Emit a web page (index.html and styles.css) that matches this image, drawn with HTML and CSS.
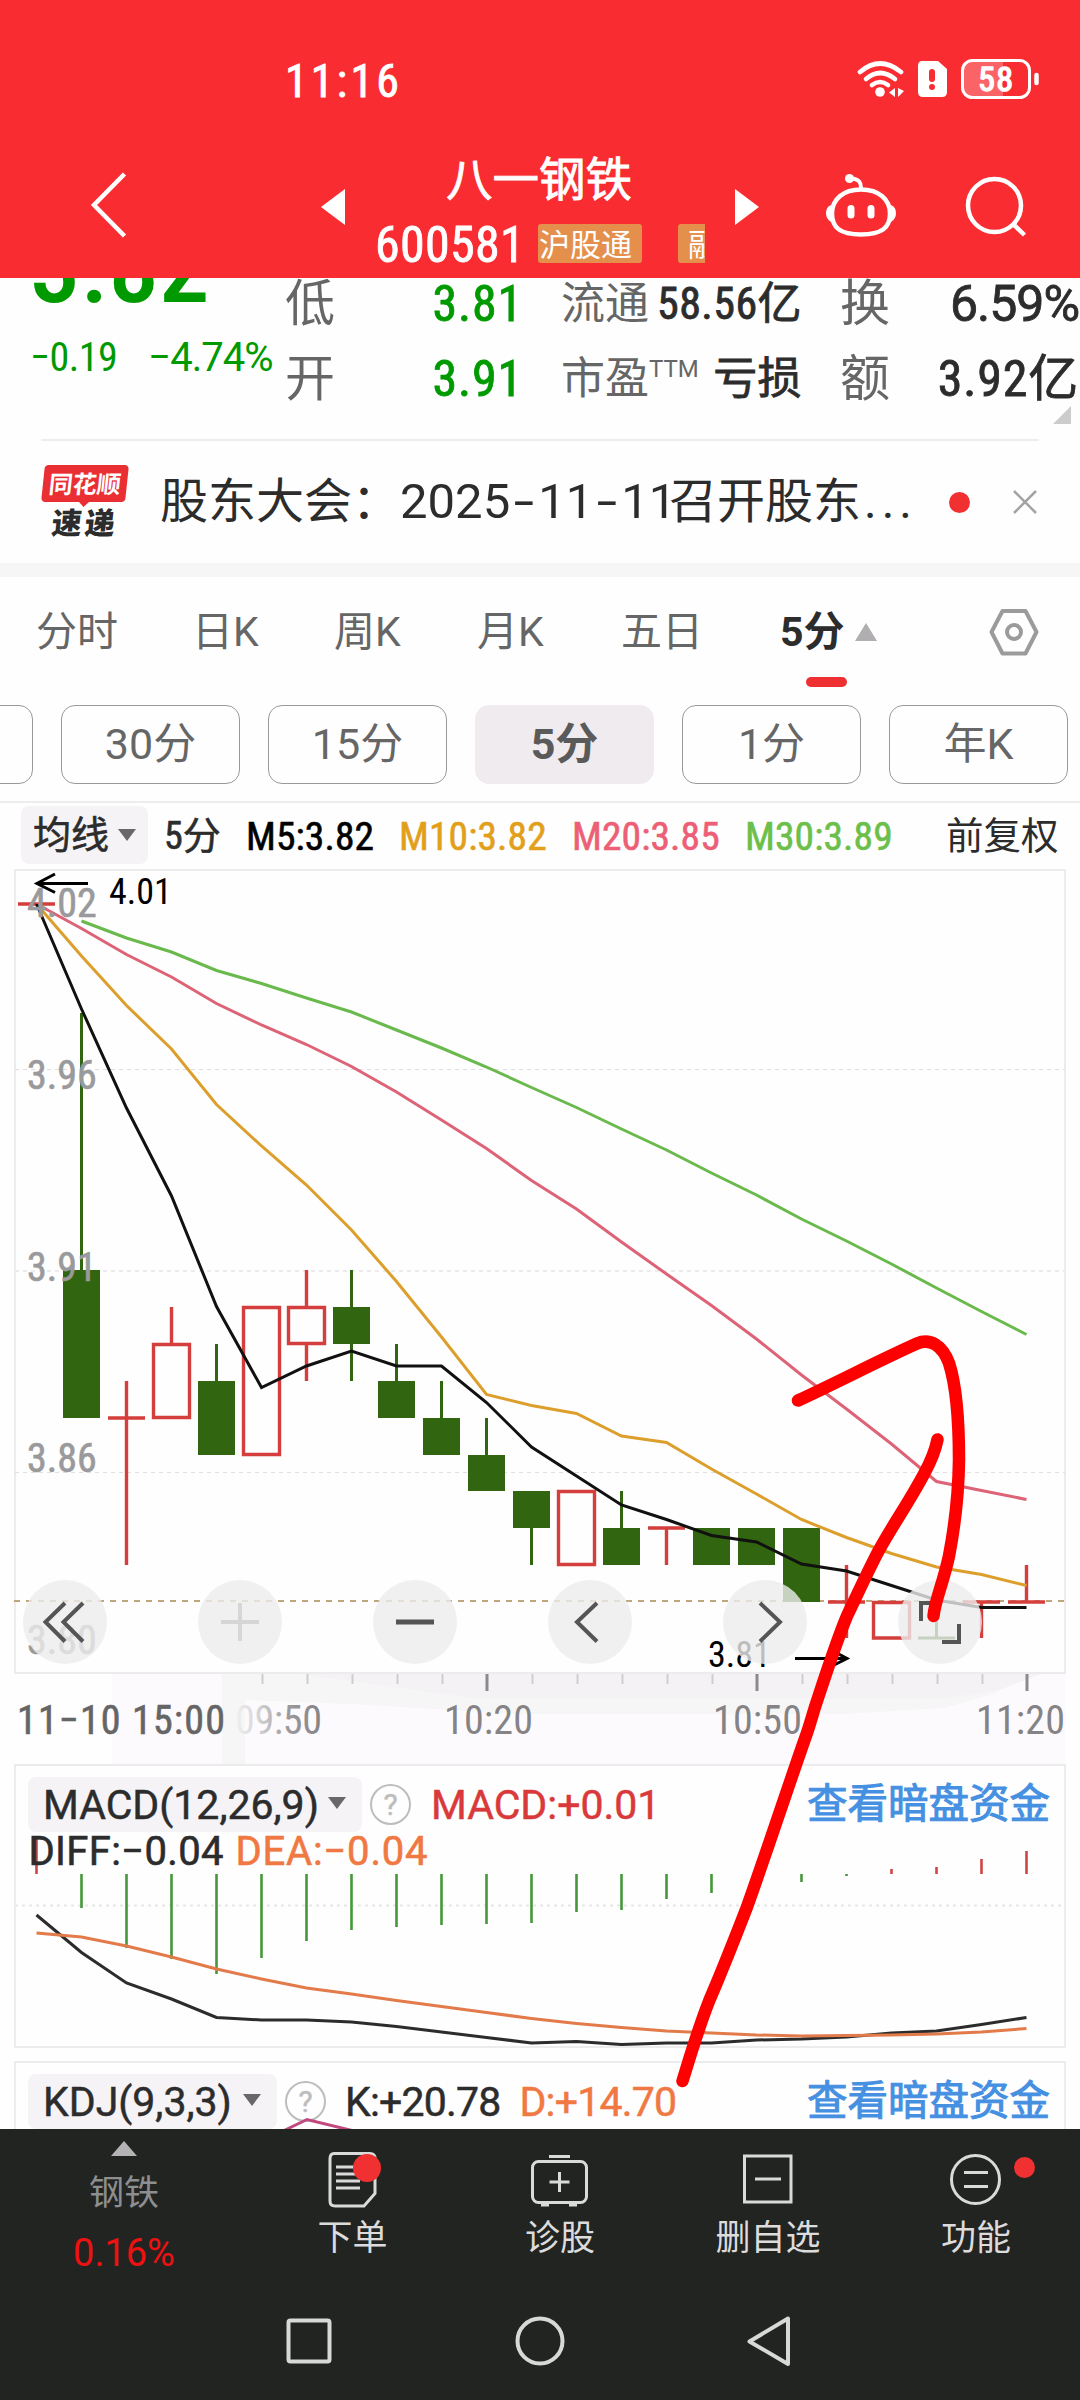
FILE: index.html
```html
<!DOCTYPE html>
<html lang="zh-CN">
  <head>
    <meta charset="UTF-8" />
    <meta name="viewport" content="width=device-width, initial-scale=1.0" />
    <title>八一钢铁 600581</title>
    <link rel="stylesheet" href="styles.css">
  </head>
  <body>
    <header class="header">
      <div class="status">
        <span class="clock">11:16</span>
        <svg class="status-icons" width="190" height="44" viewBox="855 57 190 44">
          <g fill="none" stroke="#fff" stroke-width="4.6" stroke-linecap="round">
            <path d="M860 72Q880 55 901 72" />
            <path d="M866 79Q880 67 895 79" />
            <path d="M872 85Q880 79 888 85" />
          </g>
          <circle cx="880" cy="92" r="4.8" fill="#fff" />
          <path d="M895 88v9l-6-4.500zM898 88v9l6-6z" fill="#fff" />
          <path d="M922 61h16l9 8v23q0 5-5 5h-19q-5 0-5-5V66q0-5 4-5z" fill="#fff" />
          <path d="M932 72v7M932 87v.1" stroke="#f92d31" stroke-width="6" stroke-linecap="round" />
          <path d="M1003 61v36H972q-8 0-8-8V69q0-8 8-8z" fill="#fb6467" />
          <rect x="962.500" y="60.500" width="67" height="37" rx="10" fill="none" stroke="#fff" stroke-width="3" />
          <path d="M1036.500 75v8" stroke="#fff" stroke-width="4.500" stroke-linecap="round" />
          <text x="978" y="91" class="battery">58</text>
        </svg>
      </div>
      <div class="titlebar">
        <svg class="back" width="40" height="72" viewBox="88 169 40 72"><path d="M124.500 174L94 205l30.500 31" fill="none" stroke="#fff" stroke-width="4.500" /></svg>
        <svg class="prev" width="24" height="36" viewBox="0 0 24 36"><path d="M24 0v36L0 18z" fill="#fff" /></svg>
        <div class="stock">
          <h1>八一钢铁</h1>
          <div class="code">
            <span>600581</span>
            <div class="tags"><b>沪股通</b><b>融</b></div>
          </div>
        </div>
        <svg class="next" width="24" height="36" viewBox="0 0 24 36"><path d="M0 0v36l24-18z" fill="#fff" /></svg>
        <svg class="robot" width="74" height="68" viewBox="824 172 74 68">
          <path d="M861 189.500c18 0 29 10 29 24s-8 21-29 21-29-7-29-21 11-24 29-24z" fill="none" stroke="#fff" stroke-width="4.500" />
          <path d="M861 188c0-6-2-8-8-9.500" fill="none" stroke="#fff" stroke-width="4" />
          <circle cx="849.500" cy="178.500" r="4.500" fill="#fff" />
          <path d="M831 205q-5 2-5 8t5 9zM891 205q5 2 5 8t-5 9z" fill="#fff" />
          <path d="M851 208.500v6.500M871 208.500v6.500" stroke="#fff" stroke-width="7" stroke-linecap="round" />
        </svg>
        <svg class="search" width="66" height="66" viewBox="962 173 66 66">
          <g fill="none" stroke="#fff" stroke-width="4.500"><circle cx="994.500" cy="205.500" r="26.500" /><path d="M1012 223l12.500 12" /></g>
        </svg>
      </div>
    </header>

    <section class="quote">
      <div class="price">
        <strong>3.82</strong>
        <p><span>−0.19</span><span class="pct">−4.74%</span></p>
      </div>
      <dl>
        <div><dt>低</dt><dd class="down">3.81</dd></div>
        <div class="mid"><dt>流通</dt><dd>58.56亿</dd></div>
        <div><dt>换</dt><dd class="pct">6.59%</dd></div>
        <div><dt>开</dt><dd class="down">3.91</dd></div>
        <div class="mid"><dt>市盈<sup>TTM</sup></dt><dd>亏损</dd></div>
        <div><dt>额</dt><dd>3.92亿</dd></div>
      </dl>
      <i class="corner"></i>
    </section>

    <section class="news">
      <div class="news-logo"><span>同花顺</span><b>速递</b></div>
      <p>股东大会：<em>2025<s>-</s>11<s>-</s>11</em>召开股东<u>...</u></p>
      <i class="dot"></i>
      <svg width="24" height="24" viewBox="0 0 24 24"><path d="M1 1l22 22M23 1L1 23" stroke="#a3a3a3" stroke-width="2.500" /></svg>
    </section>

    <nav class="tabs">
      <span>分时</span><span>日K</span><span>周K</span><span>月K</span><span>五日</span>
      <span class="on">5分</span>
      <svg width="50" height="50" viewBox="989 607 50 50">
        <g fill="none" stroke="#9b9b9b" stroke-width="4"><path d="M1002.500 611h23l11 21-11 21.500h-23L991.500 632z" stroke-linejoin="round" /><circle cx="1014" cy="632" r="7" /></g>
      </svg>
    </nav>

    <div class="periods">
      <span></span><span>30分</span><span>15分</span><span class="on">5分</span><span>1分</span><span>年K</span>
    </div>

    <div class="ma">
      <span class="chip">均线<i></i></span>
      <span class="p">5分</span>
      <span class="m5">M5:3.82</span>
      <span class="m10">M10:3.82</span>
      <span class="m20">M20:3.85</span>
      <span class="m30">M30:3.89</span>
      <span class="adj">前复权</span>
    </div>

    <section class="kline">
      <svg width="1080" height="895" viewBox="0 869 1080 895">
        <!-- haze left behind the time axis -->
        <path d="M112 1674h953v90H112z" fill="#fdfafd" />
        <path d="M222 1674h800l-28 20-50 14-100 6H520l-170-10-105-4v64h-23z" fill="#f6f6f6" />
        <path d="M300 1674h740l-40 16-60 9H480z" fill="#f5f2f5" />

        <rect x="15" y="870" width="1050" height="803" fill="#fefefe" stroke="#ececec" stroke-width="2" />
        <g stroke="#dedede" stroke-dasharray="4 4">
          <path d="M15 1069.500h1050M15 1472.500h1050" />
          <path d="M15 1271h1050" stroke="#ececec" stroke-width="2" />
        </g>
        <path d="M14 1601h1052" stroke="#bfa67c" stroke-width="2" stroke-dasharray="6 6" />

        <!-- falling candles -->
        <g fill="#32650f">
          <path d="M63 1270h37v148H63zM198 1381h37v74h-37zM333 1307h37v37h-37zM378 1381h37v37h-37zM423 1418h37v37h-37zM468 1455h37v36h-37zM513 1491h37v37h-37zM603 1528h37v37h-37zM693 1528h37v37h-37zM738 1528h37v37h-37zM783 1528h37v74h-37z" />
          <path d="M80 1013h3v258h-3zM215 1344h3v38h-3zM350 1270h3v111h-3zM395 1344h3v38h-3zM440 1381h3v38h-3zM485 1418h3v38h-3zM530 1528h3v37h-3zM620 1491h3v38h-3zM935 1602h3v37h-3zM918 1636.500h37v3h-37z" />
        </g>
        <!-- rising candles -->
        <g fill="none" stroke="#d43f3d" stroke-width="3.400">
          <path d="M18 904h37M108 1418h37M126.500 1381v184M171.500 1307v37M153.500 1344.500h36v73h-36zM243.500 1307.500h36v147h-36zM306.500 1270v37M306.500 1344v37M288.500 1307.500h36v36h-36zM558.500 1491.500h36v73h-36zM648 1528h37M666.500 1528v37M828 1602h37M846.500 1565v73M873.500 1602.500h36v35.500h-36zM963 1602h37M981.500 1602v36M1008 1602h37M1026.500 1565v37" />
        </g>

        <g fill="none" stroke-width="3">
          <polyline stroke="#6ab94d" points="81.500,921 126.500,938 171.500,952 216.500,970.500 261.500,983.500 306.500,998 351.500,1012 396.500,1030 441.500,1048 486.500,1067 531.500,1087.500 576.500,1107.500 621.500,1129 666.500,1150 711.500,1173 756.500,1195 801.500,1219 846.500,1241 891.500,1264 936.500,1288 981.500,1311.500 1026.500,1334.500" />
          <polyline stroke="#dd6377" points="36.500,904 81.500,928.500 126.500,954.500 171.500,977 216.500,1003.500 261.500,1025 306.500,1044.500 351.500,1066.500 396.500,1092 441.500,1120 486.500,1148.500 531.500,1180.500 576.500,1209 621.500,1242 666.500,1274 711.500,1305.500 756.500,1339 801.500,1375 846.500,1409 891.500,1444 936.500,1481.500 981.500,1490.500 1026.500,1499.500" />
          <polyline stroke="#dc9f2c" points="36.500,904 81.500,956 126.500,1005.500 171.500,1049 216.500,1104.500 261.500,1146 306.500,1185 351.500,1230 396.500,1281.500 441.500,1337 486.500,1394.500 531.500,1405.500 576.500,1413.500 621.500,1436 666.500,1442.500 711.500,1469 756.500,1494 801.500,1519.500 846.500,1537.500 891.500,1553.500 936.500,1567 981.500,1574.500 1026.500,1585.500" />
          <polyline stroke="#111" points="36.500,904 81.500,1009 126.500,1108 171.500,1196 216.500,1306.500 261.500,1387.500 306.500,1366 351.500,1351 396.500,1366 441.500,1366 486.500,1402.500 531.500,1447 576.500,1476 621.500,1505 666.500,1519.500 711.500,1535.500 756.500,1542 801.500,1564 846.500,1571 891.500,1585.500 936.500,1600 981.500,1607.500 1026.500,1607.500" />
        </g>

        <g class="scale">
          <text x="27" y="917">4.02</text>
          <text x="27" y="1089">3.96</text>
          <text x="27" y="1281">3.91</text>
          <text x="27" y="1471.500">3.86</text>
          <text x="27" y="1653.500">3.80</text>
        </g>
        <path d="M88 883.500H37M55 874l-18 9.500 18 9M795 1658.500h52M833 1651l14 7.500-14 7" fill="none" stroke="#000" stroke-width="3" />
        <text x="109" y="904" class="extreme">4.01</text>
        <text x="708" y="1667" class="extreme">3.81</text>

        <path d="M262.500 1674v10M307.500 1674v10M352.500 1674v10M397.500 1674v10M442.500 1674v10M532.500 1674v10M577.500 1674v10M622.500 1674v10M667.500 1674v10M712.500 1674v10M802.500 1674v10M847.500 1674v10M892.500 1674v10M937.500 1674v10M982.500 1674v10" stroke="#cfcdcf" stroke-width="2" />
        <path d="M487 1674v17M757 1674v17M1027 1674v17" stroke="#8c8a8c" stroke-width="3" />
        <defs>
          <linearGradient id="fade"><stop offset="0" stop-color="#f1f0f1" /><stop offset=".25" stop-color="#d8d7d8" /><stop offset=".6" stop-color="#9c9a9c" /><stop offset="1" stop-color="#858385" /></linearGradient>
        </defs>
        <g class="axis">
          <text x="17" y="1734" fill="#666566" stroke="#666566" textLength="208">11−10 15:00</text>
          <text x="235" y="1734" fill="url(#fade)" textLength="87">09:50</text>
          <text x="444" y="1734" textLength="89">10:20</text>
          <text x="713" y="1734" textLength="89">10:50</text>
          <text x="976" y="1734" textLength="89">11:20</text>
        </g>
      </svg>
      <div class="tools">
        <svg viewBox="0 0 84 84"><path d="M42 23L22.500 42 42 61.500M60 23L40.500 42 60 61.500" /></svg>
        <svg viewBox="0 0 84 84" class="off"><path d="M42 23v38M23 42h38" /></svg>
        <svg viewBox="0 0 84 84"><path d="M23 42h38" stroke-width="5" /></svg>
        <svg viewBox="0 0 84 84"><path d="M49 23L29 42l20 19.500" /></svg>
        <svg viewBox="0 0 84 84"><path d="M37 23l20 19-20 19.500" /></svg>
        <svg viewBox="0 0 84 84"><path d="M23 41V23h15M61 44v18H44" /></svg>
      </div>
    </section>

    <section class="panel macd">
      <div class="row">
        <span class="chip">MACD(12,26,9)<i></i></span>
        <span class="q">?</span>
        <span class="val red">MACD:+0.01</span>
        <a>查看暗盘资金</a>
      </div>
      <svg width="1080" height="214" viewBox="0 1832 1080 214">
        <path d="M15 1905.500h1050" stroke="#e6e6e6" stroke-width="2" stroke-dasharray="3 4" />
        <path d="M81.500 1874v34M126.500 1874v74M171.500 1874v85M216.500 1874v100M261.500 1874v84M306.500 1874v67M351.500 1874v56M396.500 1874v53M441.500 1874v51M486.500 1874v50M531.500 1874v49M576.500 1874v38M621.500 1874v36M666.500 1874v25M711.500 1874v19M756.500 1874v12M801.500 1874v8M846.500 1874v2" stroke="#45983a" stroke-width="2.600" />
        <path d="M36.500 1838v36M891.500 1869v5M936.500 1867v7M981.500 1859v15M1026.500 1851v23" stroke="#d04544" stroke-width="2.600" />
        <polyline fill="none" stroke="#2c2c2c" stroke-width="3" points="36.500,1915 81.500,1952.500 126.500,1983 171.500,1999 216.500,2017.500 261.500,2020 306.500,2020 351.500,2022 396.500,2026.500 441.500,2032 486.500,2037.500 531.500,2043 576.500,2041.500 621.500,2044.500 666.500,2043 711.500,2043 756.500,2040 801.500,2039 846.500,2037 891.500,2033 936.500,2031 981.500,2024.500 1026.500,2017.500" />
        <polyline fill="none" stroke="#e27a4a" stroke-width="3" points="36.500,1933 81.500,1937 126.500,1946 171.500,1957 216.500,1969 261.500,1979 306.500,1988 351.500,1994 396.500,2000.500 441.500,2006.500 486.500,2012.500 531.500,2018.500 576.500,2023.500 621.500,2027.500 666.500,2031 711.500,2033 756.500,2035 801.500,2036 846.500,2035.500 891.500,2035 936.500,2034 981.500,2032 1026.500,2028.500" />
        <text x="28.500" y="1865" class="diff" textLength="195">DIFF:−0.04</text>
        <text x="235.500" y="1865" class="dea" textLength="192">DEA:−0.04</text>
      </svg>
    </section>

    <section class="panel kdj">
      <div class="row">
        <span class="chip">KDJ(9,3,3)<i></i></span>
        <span class="q">?</span>
        <span class="val">K:+20.78</span>
        <span class="val orange">D:+14.70</span>
        <a>查看暗盘资金</a>
      </div>
      <svg width="80" height="14" viewBox="280 2115 80 14"><path d="M283 2130l24-11.500 47 11.500" fill="none" stroke="#c0497f" stroke-width="3" /></svg>
    </section>

    <footer class="footer">
      <div class="actions">
        <div class="sector"><i></i><span>钢铁</span><b>0.16%</b></div>
        <div>
          <svg width="56" height="58" viewBox="325 2151 56 58">
            <g fill="none" stroke="#dadada" stroke-width="3"><path d="M334 2153.500h36q5 0 5 5v35l-11 12.500h-29q-5 0-5-5v-42q0-5.500 4-5.500z" /><path d="M336 2167h18M336 2174h24M336 2181h24M336 2188h24" /></g>
            <circle cx="367" cy="2168" r="14" fill="#f13031" />
          </svg>
          <span>下单</span>
        </div>
        <div>
          <svg width="60" height="58" viewBox="530 2151 60 58">
            <g fill="none" stroke="#dadada" stroke-width="3"><rect x="532.500" y="2161.500" width="54" height="41" rx="6" /><path d="M549 2156.500h21M541 2205h8M569 2205h8M559.500 2172v20M549.500 2182h20" /></g>
          </svg>
          <span>诊股</span>
        </div>
        <div>
          <svg width="56" height="58" viewBox="739 2151 56 58"><path d="M743.500 2156h46.500v46h-46.500zM754 2179h26" fill="none" stroke="#dadada" stroke-width="3" /></svg>
          <span>删自选</span>
        </div>
        <div>
          <svg width="60" height="58" viewBox="946 2151 60 58"><g fill="none" stroke="#dadada" stroke-width="3"><circle cx="975.500" cy="2179.500" r="24" /><path d="M964 2172.500h24M964 2186.500h24" /></g></svg>
          <span>功能</span>
          <i class="dot"></i>
        </div>
      </div>
      <svg class="sysnav" width="1080" height="60" viewBox="0 2311 1080 60">
        <g fill="none" stroke="#d8d8d8" stroke-width="4" stroke-linejoin="round"><rect x="288.500" y="2320.500" width="41" height="41" rx="2" /><circle cx="540" cy="2341" r="22.500" /><path d="M788 2318.500v45.500l-38.500-22.500z" /></g>
      </svg>
    </footer>

    <!-- hand-drawn arrow over the page -->
    <svg class="scribble" width="1080" height="2400" viewBox="0 0 1080 2400">
      <path d="M798 1400.500C840 1381 880 1360 917 1343.500C930 1338 942 1345 949 1363C957 1388 959 1428 959 1460C958.500 1500 954 1530 949 1556C943 1584 935 1600 933.500 1616" />
      <path d="M937.500 1439.500C935 1452 930 1463 924 1474C908 1504 892 1526 878 1552C868 1571 858 1593 847 1616C836 1642 822 1686 815 1707C811 1720 809 1728 804.500 1740C788 1787 767 1851 747 1907C735 1938 722 1971 709.500 2000C698 2029 690 2057 682.500 2081" />
    </svg>
  </body>
</html>
```

FILE: styles.css
```css
* {
  box-sizing: border-box;
}
body {
  margin: 0;
  width: 1080px;
  height: 2400px;
  overflow: hidden;
  position: relative;
  background: #fefefe;
  color: #2c2c2c;
  font-family: Roboto, "Noto Sans CJK SC", sans-serif;
  font-stretch: 80%;
}
h1, p, dl, dd {
  margin: 0;
  font-weight: normal;
}
i, em {
  font-style: normal;
}
u, s {
  text-decoration: none;
}
svg {
  display: block;
  flex: none;
}
.pct {
  font-stretch: 100%;
}

/* header */
.header {
  height: 278px;
  background: #f92d31;
  color: #fff;
  -webkit-text-stroke: 0.8px #fff;
}
.status {
  height: 140px;
  padding: 57px 35px 0 285px;
  display: flex;
  justify-content: space-between;
}
.clock {
  font-size: 46px;
  line-height: 49px;
  letter-spacing: 3.1px;
}
.battery {
  font-size: 34px;
  fill: #fff;
  stroke: #fff;
  stroke-width: 1.5px;
  letter-spacing: 1.5px;
}
.titlebar {
  display: flex;
  align-items: flex-start;
  padding-left: 88px;
}
.back {
  margin-top: 29px;
}
.prev {
  margin: 49px 30px 0 193px;
}
.stock {
  width: 330px;
}
.stock h1 {
  padding-left: 71px;
  font-size: 46.5px;
  line-height: 80px;
}
.code {
  display: flex;
  margin-top: -1px;
  font-size: 50px;
  line-height: 52px;
}
.code span {
  width: 163px;
  letter-spacing: 0.3px;
}
.tags {
  display: flex;
  width: 167px;
  padding-top: 5px;
  overflow: hidden;
}
.tags b {
  flex: none;
  height: 39px;
  padding: 0 10px 0 1px;
  margin-right: 36px;
  background: #e4904c;
  border-radius: 3px;
  font: 31px/38px "Noto Sans CJK SC";
  -webkit-text-stroke: 0;
}
.tags b + b {
  padding-left: 10px;
}
.next {
  margin: 49px 0 0 30px;
}
.robot {
  margin: 32px 0 0 65px;
}
.search {
  margin: 33px 0 0 64px;
}

/* quote */
.quote {
  position: relative;
  height: 161px;
  display: flex;
  overflow: hidden;
}
.price {
  width: 285px;
  padding-left: 30px;
  margin-top: -60px;
  color: #009a00;
}
.price strong {
  display: block;
  font-size: 101px;
  font-weight: 500;
  line-height: 100px;
}
.price p {
  display: flex;
  gap: 31px;
  font-size: 40px;
  line-height: 80px;
  letter-spacing: -0.5px;
  white-space: nowrap;
}
.price .pct {
  letter-spacing: -1px;
}
.quote dl {
  width: 795px;
  margin-top: -11px;
  display: grid;
  grid-template-columns: 238px 241px 239px;
  grid-auto-rows: 75px;
  column-gap: 38px;
}
.quote dl div {
  display: flex;
  justify-content: space-between;
  font-size: 50px;
  line-height: 75px;
  white-space: nowrap;
}
.quote dl .mid {
  font-size: 44px;
}
.quote .mid dd {
  letter-spacing: 0.4px;
}
.quote dt {
  color: #666;
}
.quote dd {
  letter-spacing: 0.8px;
  -webkit-text-stroke: 0.8px;
}
.quote dd.pct {
  letter-spacing: -1px;
}
.quote .down {
  color: #009a00;
}
.quote sup {
  font-size: 24px;
  vertical-align: 17px;
  line-height: 1;
  font-stretch: 100%;
}
.corner {
  position: absolute;
  right: 9px;
  top: 128px;
  border-left: 18px solid transparent;
  border-bottom: 18px solid #ccc;
}

/* news */
.news {
  height: 124px;
  margin: 0 41px;
  border-top: 2px solid #ededed;
  display: flex;
  align-items: center;
}
.news-logo {
  width: 88px;
  height: 74px;
  position: relative;
  text-align: center;
}
.news-logo span {
  display: block;
  height: 37px;
  margin: 0 2px;
  background: #e92f33;
  border-radius: 4px;
  transform: skewX(-6deg);
  color: #fff;
  font: bold 24px/36px "Noto Sans CJK SC";
}
.news-logo span::after {
  content: "";
  position: absolute;
  left: 37px;
  top: 36px;
  border: 6px solid transparent;
  border-top-color: #e92f33;
}
.news-logo b {
  display: block;
  font: 900 30px/32px "Noto Sans CJK SC";
  letter-spacing: 3px;
  margin-top: 3px;
  transform: skewX(-6deg);
}
.news p {
  margin-left: 31px;
  width: 789px;
  font-size: 48px;
  line-height: 60px;
  white-space: nowrap;
}
.news em {
  display: inline-block;
  width: 269px;
  font-size: 49px;
  font-stretch: 90%;
}
.news s {
  display: inline-block;
  width: 28px;
  text-align: center;
  transform: scaleX(1.5);
}
.news u {
  letter-spacing: 5px;
  margin-left: 3px;
}
.dot {
  width: 21px;
  height: 21px;
  border-radius: 50%;
  background: #f13031;
}
.news .dot {
  margin-right: 43px;
}

/* tabs */
.tabs {
  height: 142px;
  border-top: 14px solid #f6f6f6;
  display: grid;
  grid-template-columns: 156px 142px 143px 144px 159px 209px 50px;
  padding-left: 36px;
  font-size: 41px;
  font-stretch: 90%;
  line-height: 111px;
  color: #666;
}
.tabs .on {
  position: relative;
  color: #2c2c2c;
  font-weight: bold;
}
.tabs .on::before {
  content: "";
  position: absolute;
  left: 75px;
  top: 46px;
  border: 11.5px solid transparent;
  border-top: 0;
  border-bottom: 18px solid #b0aeb1;
}
.tabs .on::after {
  content: "";
  position: absolute;
  left: 26px;
  top: 100px;
  width: 41px;
  height: 10px;
  border-radius: 5px;
  background: #ee3032;
}
.tabs svg {
  margin-top: 30px;
}

/* periods */
.periods {
  height: 96px;
  margin-left: -146px;
  display: flex;
  gap: 28px;
}
.periods span {
  flex: none;
  width: 179px;
  height: 79px;
  border: 1.500px solid #999;
  border-radius: 14px;
  text-align: center;
  font-size: 43px;
  font-stretch: 90%;
  line-height: 77px;
  color: #666;
}
.periods .on {
  background: #efebef;
  border-color: #efebef;
  font-weight: bold;
  color: #5a5a5a;
}

/* MA legend */
.ma {
  height: 68px;
  border-top: 2px solid #ededed;
  display: grid;
  grid-template-columns: 143px 82px 153px 173px 173px 201px 1fr;
  padding-left: 21px;
  font-size: 39.5px;
  line-height: 67px;
  white-space: nowrap;
  -webkit-text-stroke: 0.6px;
}
.ma .chip {
  width: 127px;
  padding-left: 12px;
  font-size: 38px;
}
.ma .p {
  font-size: 38px;
}
.m5, .m10, .m20, .m30 {
  letter-spacing: 0.1px;
}
.m5 {
  color: #000;
}
.m10 {
  color: #e2a01a;
}
.m20 {
  color: #ec5f76;
}
.m30 {
  color: #6cbf4a;
}
.ma .adj {
  font-size: 37.5px;
  -webkit-text-stroke: 0;
}
.chip {
  height: 58px;
  margin-top: 3px;
  line-height: 58px;
  border-radius: 8px;
  background: #f6f3f7;
}
.chip i {
  display: inline-block;
  margin-left: 9px;
  vertical-align: 7px;
  border: 9px solid transparent;
  border-bottom: 0;
  border-top: 12px solid #686868;
}

/* chart */
.kline {
  position: relative;
  height: 895px;
}
.kline text, .macd text {
  font-size: 40px;
  stroke-width: 0.6px;
}
.scale {
  fill: #9a999b;
  stroke: #9a999b;
}
.kline .extreme {
  font-size: 36px;
}
.axis {
  fill: #858385;
}
.tools {
  position: absolute;
  left: 23px;
  top: 711px;
  display: flex;
  gap: 91px;
}
.tools svg {
  width: 84px;
  height: 84px;
  border-radius: 50%;
  background: rgba(236, 236, 236, 0.8);
  fill: none;
  stroke: #555;
  stroke-width: 4;
}
.tools .off {
  stroke: #d6d6d6;
}

/* indicator panels */
.panel {
  margin: 0 14px;
  border: 2px solid #ececec;
  overflow: hidden;
  font-stretch: 100%;
}
.macd {
  height: 284px;
  margin-bottom: 13px;
}
.kdj {
  height: 72px;
  position: relative;
}
.row {
  display: flex;
  padding-top: 11px;
  height: 66px;
  font-size: 41px;
  white-space: nowrap;
  -webkit-text-stroke: 0.5px;
}
.panel .chip {
  display: flex;
  justify-content: space-between;
  width: 334px;
  height: 55px;
  margin: 0 0 0 12px;
  padding: 0 16px 0 15px;
  line-height: 56px;
}
.kdj .chip {
  width: 249px;
}
.panel .chip i {
  margin: 20px 0 auto;
}
.q {
  width: 41px;
  height: 41px;
  margin: 7px 0 0 8px;
  border: 2.500px solid #bdbdbd;
  border-radius: 50%;
  text-align: center;
  font-size: 30px;
  line-height: 37px;
  color: #bdbdbd;
}
.val {
  margin-left: 20px;
  line-height: 56px;
}
.kdj .val {
  margin-left: 19px;
  letter-spacing: -0.8px;
}
.red {
  color: #d9393a;
}
.orange {
  color: #f07843;
}
.row a {
  margin-left: auto;
  margin-right: 14px;
  font-size: 40.5px;
  line-height: 55px;
  color: #4690e2;
  -webkit-text-stroke: 1px;
}
.macd svg {
  margin-left: -16px;
}
.diff {
  fill: #2c2c2c;
  stroke: #2c2c2c;
}
.dea {
  fill: #f07843;
  stroke: #f07843;
}
.kdj svg {
  position: absolute;
  left: 264px;
  top: 53px;
}

/* footer */
.footer {
  position: absolute;
  left: 0;
  right: 0;
  bottom: 0;
  height: 271px;
  background: #222422;
}
.actions {
  height: 182px;
  padding: 0 0 0 20px;
  display: grid;
  grid-template-columns: 229px 207px 208px 208px 208px;
}
.actions > div {
  position: relative;
  display: flex;
  flex-direction: column;
  align-items: center;
  font-size: 35px;
  color: #dcdcdc;
}
.actions svg {
  margin-top: 22px;
}
.actions span {
  line-height: 60px;
}
.actions .sector {
  padding-right: 21px;
  color: #8c8e90;
}
.sector i {
  margin-top: 12px;
  border: 13px solid transparent;
  border-top: 0;
  border-bottom: 15px solid #b5b3b6;
}
.actions .sector span {
  line-height: 76px;
}
.sector b {
  margin-top: -7px;
  font-size: 38px;
  font-weight: normal;
  font-stretch: 100%;
  line-height: 56px;
  color: #ee1111;
}
.actions .dot {
  position: absolute;
  left: 142px;
  top: 28px;
}

.scribble {
  position: absolute;
  left: 0;
  top: 0;
  pointer-events: none;
  fill: none;
  stroke: #fe0000;
  stroke-width: 12.5;
  stroke-linecap: round;
}
```
